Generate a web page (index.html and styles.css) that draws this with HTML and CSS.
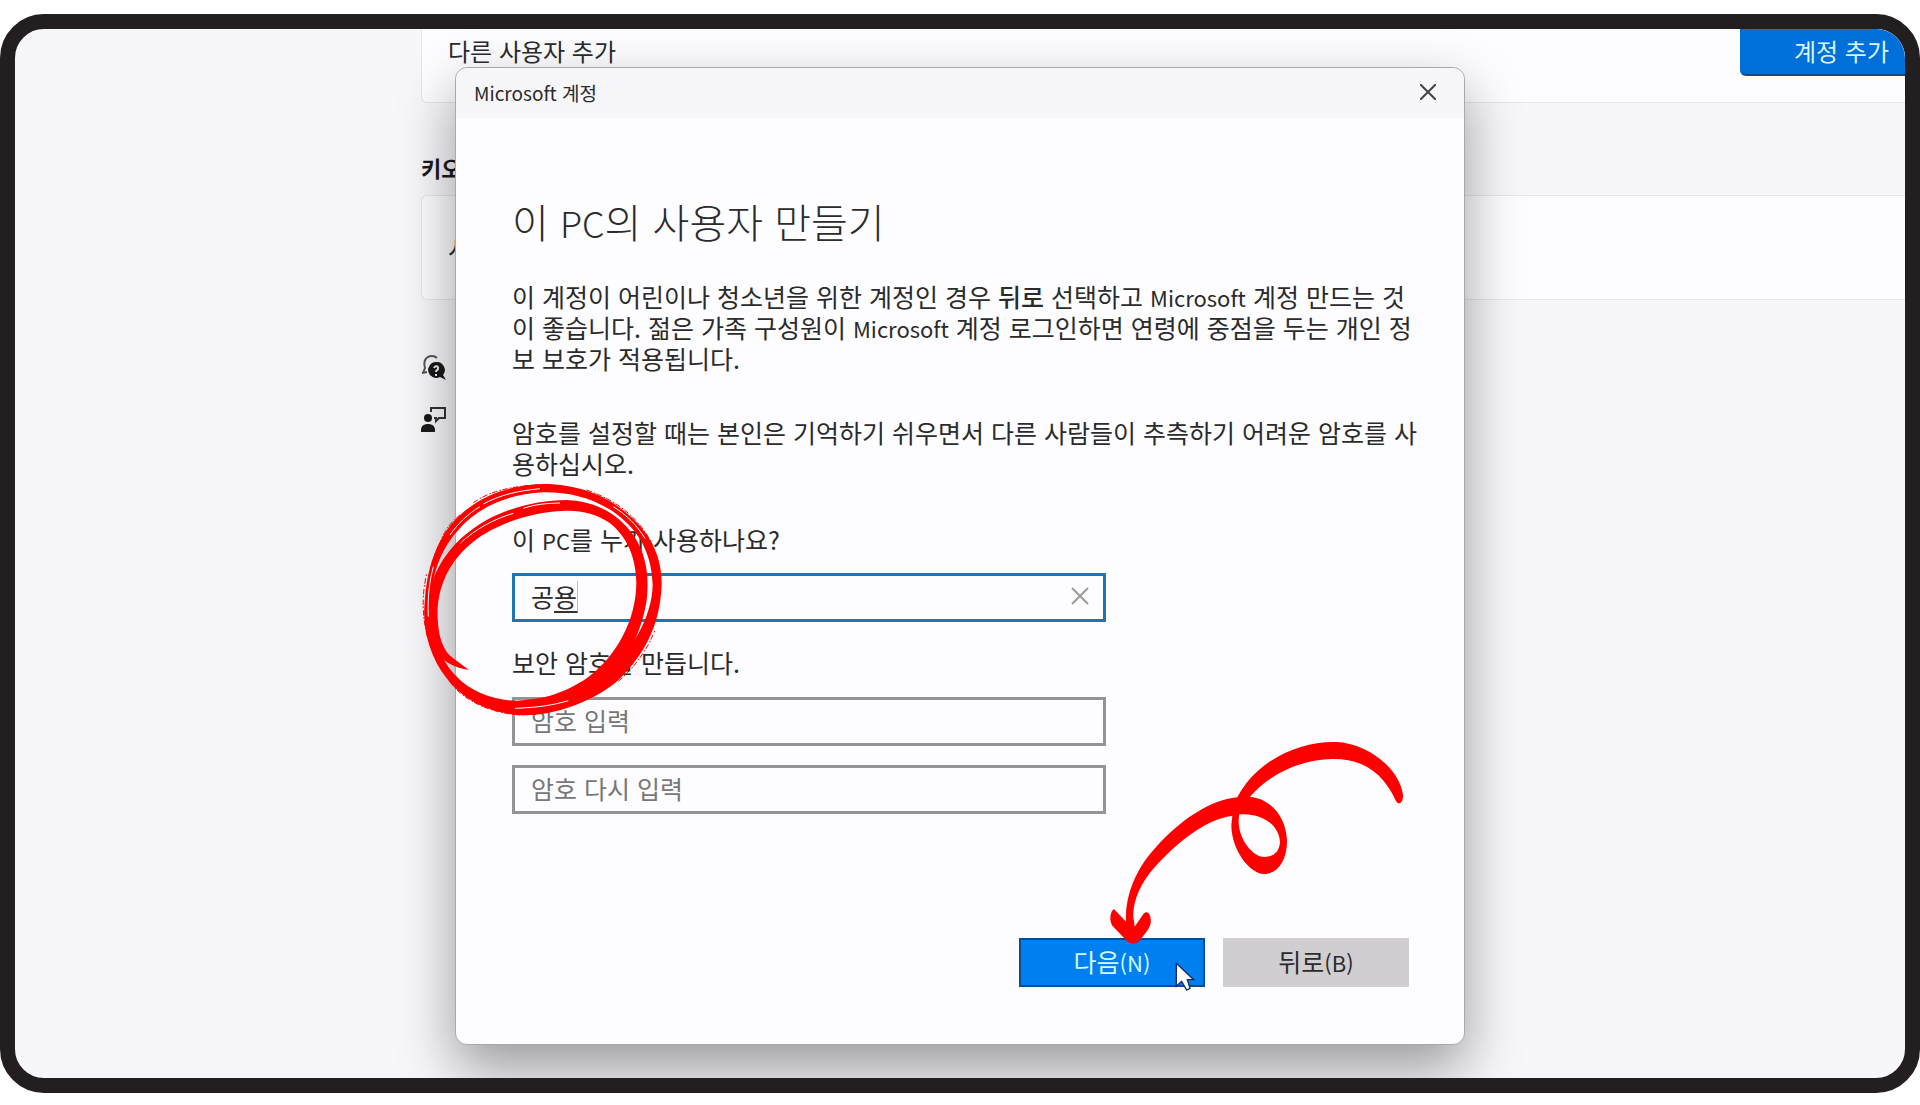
FILE: index.html
```html
<!DOCTYPE html>
<html lang="ko">
<head>
  <meta charset="UTF-8" />
  <meta name="viewport" content="width=device-width, initial-scale=1.0"/>
  <title>Microsoft 계정</title>
  <link rel="stylesheet" href="styles.css">
</head>

<body>
  <div class="screen">
    <main class="settings">
      <div class="card add-user">
        <span>다른 사용자 추가</span>
        <button type="button" class="add-button">계정 추가</button>
      </div>
      <h2>키오스크 설정</h2>
      <div class="card kiosk">
        <span>시작</span>
      </div>
      <div class="links">
        <a href="#" aria-label="도움말 보기">
          <svg width="26" height="28" viewBox="0 0 26 28">
            <path d="M2 19 L4 14 C2 7 5 2 11 2 C13 2 15 3 16 4" fill="none" stroke="#555" stroke-width="2"/>
            <path d="M1 19 L6 18" stroke="#555" stroke-width="2"/>
            <path d="M15 8 a8 8 0 1 0 4 15 L25 26 L22 21 A8 8 0 0 0 15 8 Z" fill="#1a1a1a"/>
            <path d="M13 14 C14 11 18 12 17 15 C16 17 15 16 15 18 M15 20 V22" fill="none" stroke="#eee" stroke-width="2"/>
          </svg>
        </a>
        <a href="#" aria-label="피드백 보내기">
          <svg width="26" height="28" viewBox="0 0 26 28">
            <circle cx="7" cy="12" r="4" fill="#1a1a1a"/>
            <path d="M0 26 V24 C0 20 3 18 7 18 C11 18 14 20 14 24 V26 Z" fill="#1a1a1a"/>
            <path d="M10 6 V2 H24 V12 H18 L15 15 V12 H13" fill="none" stroke="#333" stroke-width="2"/>
          </svg>
        </a>
      </div>
    </main>

    <div class="dialog" role="dialog" aria-labelledby="dialog-title">
      <div class="title-bar">
        <span id="dialog-title">Microsoft 계정</span>
        <button type="button" class="close" aria-label="닫기">
          <svg width="16" height="16" viewBox="0 0 16 16"><path d="M0 0 L16 16 M16 0 L0 16" stroke="#444" stroke-width="2"/></svg>
        </button>
      </div>

      <form class="content">
        <h1>이 <span class="en">PC</span>의 사용자 만들기</h1>
        <p>이 계정이 어린이나 청소년을 위한 계정인 경우 <b>뒤로</b> 선택하고 <span class="en">Microsoft</span> 계정 만드는 것<br>이 좋습니다. 젊은 가족 구성원이 <span class="en">Microsoft</span> 계정 로그인하면 연령에 중점을 두는 개인 정<br>보 보호가 적용됩니다.</p>
        <p>암호를 설정할 때는 본인은 기억하기 쉬우면서 다른 사람들이 추측하기 어려운 암호를 사<br>용하십시오.</p>

        <label for="user">이 <span class="en">PC</span>를 누가 사용하나요?</label>
        <div class="field">
          <input type="text" id="user" class="active" value="공용">
          <span class="composing"></span>
          <button type="button" class="clear" aria-label="지우기">
            <svg width="18" height="18" viewBox="0 0 18 18"><path d="M1 1 L17 17 M17 1 L1 17" stroke="#999" stroke-width="2"/></svg>
          </button>
        </div>

        <label for="password">보안 암호를 만듭니다.</label>
        <input type="password" id="password" placeholder="암호 입력">
        <input type="password" class="again" aria-label="암호 다시 입력" placeholder="암호 다시 입력">

        <div class="buttons">
          <button type="button" class="next">다음<span class="en">(N)</span></button>
          <button type="button" class="back">뒤로<span class="en">(B)</span></button>
        </div>
      </form>

      <!-- 강조 표시 -->
      <svg class="mark circle" viewBox="0 0 960 840" aria-hidden="true">
        <path fill="red" fill-rule="evenodd" d="M140 655 C88 590 66 500 74 430 C80 330 105 250 160 185 C235 105 330 75 430 72 C540 72 630 112 690 168 C760 230 786 300 785 375 C780 500 730 590 650 665 C580 722 480 758 400 765 C300 770 200 735 140 655 Z
          M165 645 C215 700 290 722 350 722 C450 715 540 690 600 650 C690 590 757 470 758 375 C755 270 710 205 640 155 C570 110 500 96 430 97 C320 102 230 145 175 210 C120 270 96 350 94 410 C88 510 115 590 165 645 Z"/>
        <path fill="red" d="M207 630 C165 625 130 605 112 580 C85 530 77 460 88 400 C105 310 170 230 260 180 C330 142 420 120 500 120 C600 125 660 170 700 225 C740 285 748 350 740 420 C725 520 675 620 600 680 C530 725 440 742 345 750 L330 728 C430 722 500 695 560 655 C650 590 708 480 709 370 C708 290 680 230 630 190 C590 162 540 150 490 153 C400 155 290 190 220 245 C150 300 110 380 113 470 C114 530 130 575 160 595 Z"/>
        <path fill="none" stroke="#fdfcff" stroke-width="3" d="M345 745 C420 742 460 735 505 722 M85 470 C82 400 90 360 100 320 M150 225 C170 195 205 160 240 140 M250 132 C300 105 350 93 420 86 M640 140 C680 165 710 195 735 235 M180 250 C230 205 280 178 340 160 M370 145 C410 132 440 130 480 129"/>
        <path fill="none" stroke="red" stroke-width="3" stroke-dasharray="16 7 5 4" d="M82 530 C60 440 72 380 80 340 M118 255 C135 205 155 185 180 165 M220 128 C270 92 340 78 420 74 M560 90 C660 125 720 180 755 250 M120 330 C170 240 250 180 345 152 M150 665 C195 730 290 764 370 765 M655 664 C700 625 740 575 765 510"/>
      </svg>
      <svg class="mark arrow" viewBox="0 0 1080 870" aria-hidden="true">
        <path fill="red" d="M948 243 C905 150 840 115 755 117 C650 120 560 170 510 231 C570 235 620 290 621 365 C620 425 590 462 552 462 C510 462 454 390 454 315 L457 287 C370 300 290 370 225 440 C180 490 158 545 160 590 L164 620 L190 582 C203 568 215 585 212 610 C205 635 190 645 182 659 C172 672 154 674 143 665 L97 617 C87 600 90 575 102 567 L138 605 C135 530 165 450 225 385 C300 300 390 240 472 232 C530 120 660 62 770 66 C870 72 960 150 969 225 C970 248 956 258 948 243 Z"/>
        <path fill="#fdfcff" d="M478 283 C540 278 595 310 600 365 C598 395 580 411 552 411 C515 411 465 345 478 283 Z"/>
        <path fill="#fff" stroke="#1a2c5a" stroke-width="4" d="M289 730 V799 L305 784 L320 810 L330 805 L322 779 H341 Z"/>
      </svg>
    </div>
  </div>
</body>
</html>
```
FILE: styles.css
```css
* {
  box-sizing: border-box;
}

body {
  margin: 0;
  padding: 14px 0 12px;
  background-color: #fff;
  color: #2b2b2b;
  font-family: "Noto Sans CJK KR", sans-serif;
  font-size: 25px;
}

button, input {
  font-family: inherit;
  font-size: inherit;
  color: inherit;
  border: none;
  margin: 0;
}

.screen {
  position: relative;
  min-height: calc(100vh - 26px);
  border: 15px solid #231f20;
  border-radius: 44px;
  background-color: #f7f6f9;
  overflow: hidden;
}

/* 설정 화면 */
.settings {
  margin-left: calc(50% - 539px);
  font-size: 24px;
}

.card {
  display: flex;
  justify-content: space-between;
  background-color: #fdfcff;
  border: 1px solid #e6e5e8;
  border-right: none;
  padding-left: 26px;
}

.add-user {
  height: 74px;
  border-top: none;
  border-radius: 0 0 0 6px;
  line-height: 43px;
}

.add-button {
  width: 165px;
  height: 47px;
  padding: 0 0 3px 38px;
  background-color: #006fd8;
  border-bottom: 2px solid #08508f;
  border-radius: 0 0 0 6px;
  color: #d5f6ff;
}

.settings h2 {
  margin: 0;
  padding-top: 42px;
  height: 92px;
  font-size: 22px;
  line-height: 44px;
  color: #1a1a1a;
}

.kiosk {
  height: 105px;
  border-radius: 6px 0 0 6px;
  line-height: 103px;
}

.links {
  display: flex;
  flex-direction: column;
  gap: 24px;
  padding-top: 54px;
}

.links a {
  display: flex;
}

/* 계정 만들기 창 */
.dialog {
  position: absolute;
  top: 38px;
  left: 0;
  right: 0;
  width: 1010px;
  height: 978px;
  margin: 0 auto;
  background-color: #fdfcff;
  border: 1px solid #a9a8ab;
  border-radius: 12px;
  box-shadow: 0 24px 56px rgba(0,0,0,0.38);
}

.title-bar {
  display: flex;
  justify-content: space-between;
  align-items: center;
  height: 50px;
  padding: 0 28px 2px 18px;
  background-color: #f7f6f9;
  border-radius: 12px 12px 0 0;
  font-size: 19px;
}

.close, .clear {
  display: flex;
  padding: 0;
  background: none;
}

.content {
  display: flex;
  flex-direction: column;
  padding: 73px 55px 0 56px;
}

/* 영문은 한글보다 조금 작게 */
.en {
  font-size: 22px;
  line-height: 1;
}

h1 {
  margin: 0 0 30px;
  font-size: 40px;
  font-weight: 300;
  line-height: 60px;
}

h1 .en {
  font-size: 36px;
}

p {
  margin: 0 0 43px;
  line-height: 31px;
  white-space: nowrap;
}

b {
  font-weight: 500;
}

label {
  line-height: 34px;
}

input {
  width: 594px;
  height: 49px;
  padding: 0 16px 4px;
  background-color: #fdfcff;
  border: 3px solid #949396;
  outline: none;
}

input::placeholder {
  color: #777;
}

.field {
  position: relative;
  width: 594px;
  margin: 17px 0 23px;
}

.active {
  display: block;
  border-color: #1e74b4;
}

.composing {
  position: absolute;
  left: 42px;
  bottom: 9px;
  width: 24px;
  height: 32px;
  border-right: 1px solid #bbb;
  border-bottom: 2px solid #333;
}

.clear {
  position: absolute;
  right: 17px;
  top: 14px;
}

#password {
  margin-top: 18px;
}

.again {
  margin-top: 19px;
}

.buttons {
  display: flex;
  justify-content: flex-end;
  gap: 18px;
  margin-top: 124px;
}

.buttons button {
  width: 186px;
  height: 49px;
  padding: 0 0 4px;
  background-color: #d0ced1;
}

.buttons .next {
  background-color: #0080f0;
  border: 2px solid #0b4c8c;
  color: #d0f8f5;
}

/* 빨간 표시 */
.mark {
  position: absolute;
  pointer-events: none;
}

.circle {
  left: -56px;
  top: 392px;
  width: 320px;
  height: 280px;
}

.arrow {
  left: 624px;
  top: 652px;
  width: 360px;
  height: 290px;
}
```
